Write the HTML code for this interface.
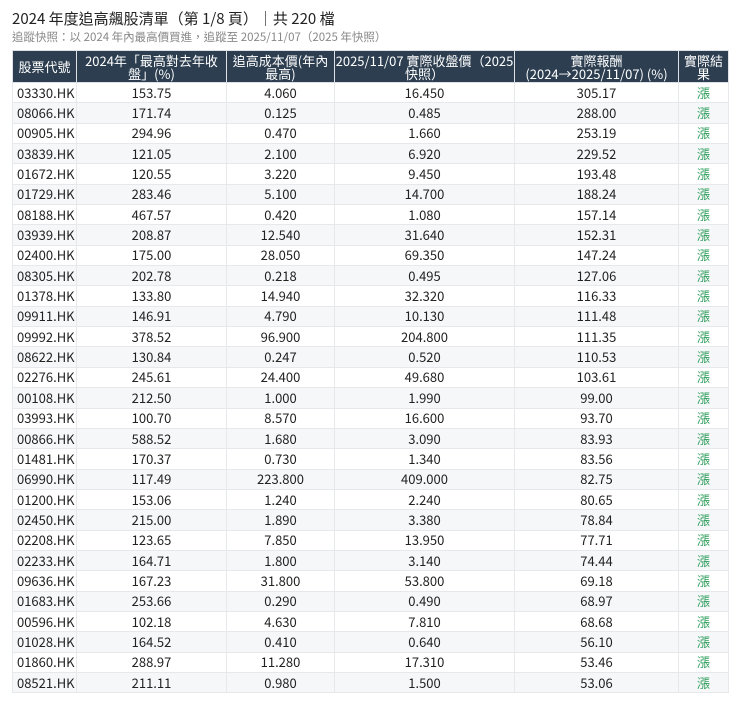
<!DOCTYPE html>
<html><head><meta charset="utf-8"><style>
body{margin:0;background:#fff;font-family:"Liberation Sans","Noto Sans CJK TC",sans-serif;color:#222;}
.t{position:absolute;left:12px;top:8px;font-size:15px;font-family:"Noto Sans CJK TC",sans-serif;color:#222;white-space:nowrap}
.s{position:absolute;left:12px;top:29px;font-size:11.5px;font-family:"Noto Sans CJK TC",sans-serif;color:#888;white-space:nowrap}
table{position:absolute;left:12px;top:50px;width:716px;border-collapse:collapse;font-family:"Noto Sans CJK TC",sans-serif;font-size:13px;table-layout:fixed}
th{background:#2c3e50;color:#fff;font-weight:normal;line-height:13px;height:31px;padding:0;border:1px solid #dde1e5;font-size:13px;white-space:nowrap;overflow:hidden}
td{height:19.35px;padding:0 4px;border:1px solid #e6e8eb;text-align:center;line-height:14px;white-space:nowrap}
td:first-child{text-align:left}
tr:nth-child(even) td{background:#f6f7f9}
.g{color:#2e9e5b}
</style></head><body>
<div class="t">2024 年度追高飆股清單（第 1/8 頁）｜共 220 檔</div>
<div class="s">追蹤快照：以 2024 年內最高價買進，追蹤至 2025/11/07（2025 年快照）</div>
<table>
<colgroup><col style="width:64px"><col style="width:150px"><col style="width:108px"><col style="width:180px"><col style="width:164px"><col style="width:50px"></colgroup>
<thead><tr><th>股票代號</th><th>2024年「最高對去年收<br>盤」(%)</th><th>追高成本價(年內<br>最高)</th><th>2025/11/07 實際收盤價（2025<br>快照）</th><th>實際報酬<br>(2024→2025/11/07) (%)</th><th>實際結<br>果</th></tr></thead>
<tbody>
<tr><td>03330.HK</td><td>153.75</td><td>4.060</td><td>16.450</td><td>305.17</td><td class="g">漲</td></tr>
<tr><td>08066.HK</td><td>171.74</td><td>0.125</td><td>0.485</td><td>288.00</td><td class="g">漲</td></tr>
<tr><td>00905.HK</td><td>294.96</td><td>0.470</td><td>1.660</td><td>253.19</td><td class="g">漲</td></tr>
<tr><td>03839.HK</td><td>121.05</td><td>2.100</td><td>6.920</td><td>229.52</td><td class="g">漲</td></tr>
<tr><td>01672.HK</td><td>120.55</td><td>3.220</td><td>9.450</td><td>193.48</td><td class="g">漲</td></tr>
<tr><td>01729.HK</td><td>283.46</td><td>5.100</td><td>14.700</td><td>188.24</td><td class="g">漲</td></tr>
<tr><td>08188.HK</td><td>467.57</td><td>0.420</td><td>1.080</td><td>157.14</td><td class="g">漲</td></tr>
<tr><td>03939.HK</td><td>208.87</td><td>12.540</td><td>31.640</td><td>152.31</td><td class="g">漲</td></tr>
<tr><td>02400.HK</td><td>175.00</td><td>28.050</td><td>69.350</td><td>147.24</td><td class="g">漲</td></tr>
<tr><td>08305.HK</td><td>202.78</td><td>0.218</td><td>0.495</td><td>127.06</td><td class="g">漲</td></tr>
<tr><td>01378.HK</td><td>133.80</td><td>14.940</td><td>32.320</td><td>116.33</td><td class="g">漲</td></tr>
<tr><td>09911.HK</td><td>146.91</td><td>4.790</td><td>10.130</td><td>111.48</td><td class="g">漲</td></tr>
<tr><td>09992.HK</td><td>378.52</td><td>96.900</td><td>204.800</td><td>111.35</td><td class="g">漲</td></tr>
<tr><td>08622.HK</td><td>130.84</td><td>0.247</td><td>0.520</td><td>110.53</td><td class="g">漲</td></tr>
<tr><td>02276.HK</td><td>245.61</td><td>24.400</td><td>49.680</td><td>103.61</td><td class="g">漲</td></tr>
<tr><td>00108.HK</td><td>212.50</td><td>1.000</td><td>1.990</td><td>99.00</td><td class="g">漲</td></tr>
<tr><td>03993.HK</td><td>100.70</td><td>8.570</td><td>16.600</td><td>93.70</td><td class="g">漲</td></tr>
<tr><td>00866.HK</td><td>588.52</td><td>1.680</td><td>3.090</td><td>83.93</td><td class="g">漲</td></tr>
<tr><td>01481.HK</td><td>170.37</td><td>0.730</td><td>1.340</td><td>83.56</td><td class="g">漲</td></tr>
<tr><td>06990.HK</td><td>117.49</td><td>223.800</td><td>409.000</td><td>82.75</td><td class="g">漲</td></tr>
<tr><td>01200.HK</td><td>153.06</td><td>1.240</td><td>2.240</td><td>80.65</td><td class="g">漲</td></tr>
<tr><td>02450.HK</td><td>215.00</td><td>1.890</td><td>3.380</td><td>78.84</td><td class="g">漲</td></tr>
<tr><td>02208.HK</td><td>123.65</td><td>7.850</td><td>13.950</td><td>77.71</td><td class="g">漲</td></tr>
<tr><td>02233.HK</td><td>164.71</td><td>1.800</td><td>3.140</td><td>74.44</td><td class="g">漲</td></tr>
<tr><td>09636.HK</td><td>167.23</td><td>31.800</td><td>53.800</td><td>69.18</td><td class="g">漲</td></tr>
<tr><td>01683.HK</td><td>253.66</td><td>0.290</td><td>0.490</td><td>68.97</td><td class="g">漲</td></tr>
<tr><td>00596.HK</td><td>102.18</td><td>4.630</td><td>7.810</td><td>68.68</td><td class="g">漲</td></tr>
<tr><td>01028.HK</td><td>164.52</td><td>0.410</td><td>0.640</td><td>56.10</td><td class="g">漲</td></tr>
<tr><td>01860.HK</td><td>288.97</td><td>11.280</td><td>17.310</td><td>53.46</td><td class="g">漲</td></tr>
<tr><td>08521.HK</td><td>211.11</td><td>0.980</td><td>1.500</td><td>53.06</td><td class="g">漲</td></tr>
</tbody></table>
</body></html>
